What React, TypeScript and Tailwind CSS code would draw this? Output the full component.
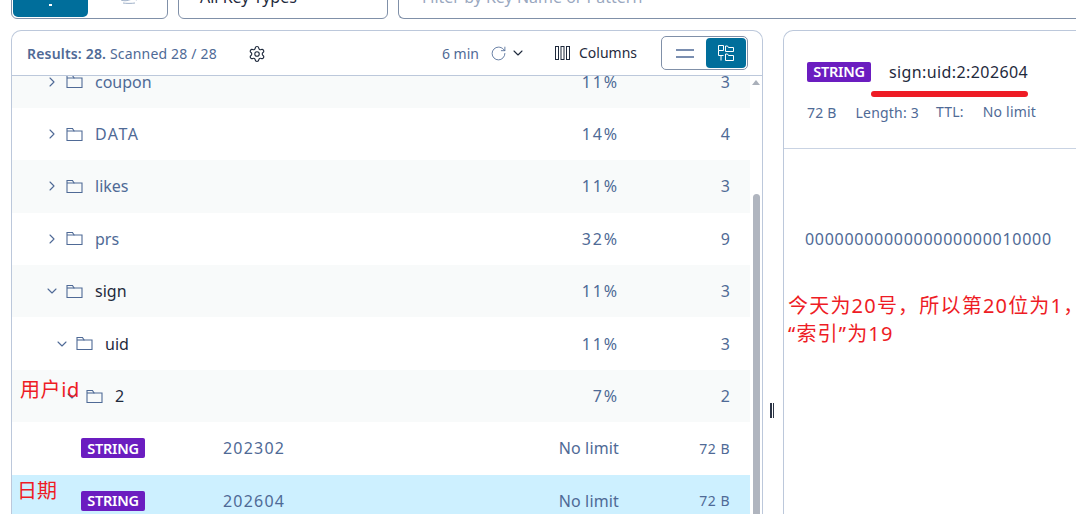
import { ChevronDown, ChevronRight, RotateCw, Settings } from 'lucide-react'

const FONT = "font-['Noto_Sans','Noto_Sans_CJK_SC',sans-serif]"
const NOTE = "font-['Noto_Sans','Noto_Sans_CJK_SC',sans-serif] text-[20px] text-[#ee1c25]"

type FolderRow = { name: string; pct: string; count: string; depth: number; open?: boolean; dark?: boolean }

const FOLDERS: FolderRow[] = [
    { name: 'coupon', pct: '11%', count: '3', depth: 0 },
    { name: 'DATA', pct: '14%', count: '4', depth: 0 },
    { name: 'likes', pct: '11%', count: '3', depth: 0 },
    { name: 'prs', pct: '32%', count: '9', depth: 0 },
    { name: 'sign', pct: '11%', count: '3', depth: 0, open: true, dark: true },
    { name: 'uid', pct: '11%', count: '3', depth: 1, open: true, dark: true },
    { name: '2', pct: '7%', count: '2', depth: 2, open: true, dark: true },
]

function FolderIcon(): JSX.Element {
    return (
        <svg width="17" height="15" viewBox="0 0 17 15" fill="none" stroke="#4f6a96" strokeWidth="1.1" className="shrink-0">
            <path d="M1 13.5V1.5h5.5l1.5 2.500h8v9.500z" />
            <path d="M1 4h7.500" />
        </svg>
    )
}

function TypeBadge(): JSX.Element {
    return (
        <span className="flex h-[20px] w-[64px] shrink-0 items-center justify-center rounded-[2px] bg-[#6b1dc0] text-[14.5px] font-semibold tracking-[-0.2px] text-white">
            STRING
        </span>
    )
}

function TreeRow({ row, striped }: { row: FolderRow; striped: boolean }): JSX.Element {
    const Chevron = row.open ? ChevronDown : ChevronRight
    return (
        <div className={`flex h-[52.4px] shrink-0 items-center text-[16px] ${striped ? 'bg-[#f8fafa]' : 'bg-white'}`}>
            <div
                className={`flex min-w-0 flex-1 items-center ${row.depth === 0 ? 'pl-[32px]' : row.depth === 1 ? 'pl-[42px]' : 'pl-[52px]'}`}
            >
                <Chevron size={16} strokeWidth={1.6} color="#4f6a96" className="shrink-0" />
                <span className="ml-[6px] flex">
                    <FolderIcon />
                </span>
                <span
                    className={`ml-[12px] ${row.name === 'DATA' || row.name === '2' ? 'tracking-[1.5px]' : ''} ${row.dark ? 'text-[#1f2a3d]' : 'text-[#4f6a96]'}`}
                >
                    {row.name}
                </span>
            </div>
            <span className="w-[80px] text-right tracking-[1.9px] text-[#4f6a96]">{row.pct}</span>
            <span className="w-[131px] pr-[20px] text-right text-[#4f6a96]">{row.count}</span>
        </div>
    )
}

function KeyRow({ name, selected }: { name: string; selected?: boolean }): JSX.Element {
    return (
        <div className={`flex h-[52.4px] shrink-0 items-center ${selected ? 'bg-[#cdf0ff]' : 'bg-white'}`}>
            <div className="flex min-w-0 flex-1 items-center pl-[69px]">
                <TypeBadge />
                <span className="ml-[78px] text-[16px] tracking-[1.2px] text-[#4f6a96]">{name}</span>
            </div>
            <span className="w-[80px] text-right text-[16px] tracking-[0.15px] text-[#4f6a96]">No limit</span>
            <span className="w-[131px] pr-[20px] text-right text-[14px] tracking-[0.5px] text-[#4f6a96]">72 B</span>
        </div>
    )
}

function TopBar(): JSX.Element {
    return (
        <div className="flex h-[19px] items-end gap-[10px] overflow-hidden pl-[11px]">
            <div className="flex h-[40px] w-[157px] shrink-0 rounded-b-[6px] border border-[#8090a8] p-[1px]">
                <div className="flex w-[75px] items-end justify-center rounded-b-[5px] bg-[#006e9b] pb-[11px]">
                    <span className="h-[2px] w-[3px] bg-white" />
                </div>
                <div className="flex flex-1 items-end justify-center pb-[13px] pl-[4px]">
                    <svg width="18" height="8" viewBox="0 0 18 8" fill="none" stroke="#9fb0c8" strokeWidth="1">
                        <path d="M1 1c3 1 5 1 8 0s5-1 8 0M1 4c3 1 5 1 8 0s5-1 8 0M3 7c3 .5 9 .5 12 0" />
                    </svg>
                </div>
            </div>
            <div className="flex h-[40px] w-[210px] shrink-0 items-center justify-between rounded-b-[6px] border border-[#8090a8] pb-[4px] pl-[21px] pr-[14px] text-[16px] text-[#1f2a3d]">
                <span>All Key Types</span>
                <ChevronDown size={14} color="#1f2a3d" />
            </div>
            <div className="flex h-[40px] min-w-0 flex-1 items-center rounded-bl-[6px] border border-r-0 border-[#8090a8] pb-[4px] pl-[23px] text-[16px] text-[#9aa8bf]">
                <span>Filter by Key Name or Pattern</span>
            </div>
        </div>
    )
}

function ListHeader(): JSX.Element {
    return (
        <div className="flex h-[45px] shrink-0 items-center border-b border-[#bcc8db] pl-[15px] pr-[14px]">
            <span className="text-[14px] tracking-[0.18px] text-[#4f6a96]">
                <span className="font-semibold">Results: 28.</span> Scanned 28 / 28
            </span>
            <Settings size={18} strokeWidth={1.5} color="#1f2a3d" className="ml-[31px] mt-[1px]" />
            <span className="ml-auto text-[14px] text-[#4f6a96]">6 min</span>
            <RotateCw size={17} strokeWidth={1.2} color="#4f6a96" className="ml-[11px]" />
            <ChevronDown size={16} strokeWidth={1.6} color="#1f2a3d" className="ml-[3px]" />
            <svg width="15" height="14" viewBox="0 0 15 14" fill="none" stroke="#1f2a3d" strokeWidth="1" className="ml-[29px]">
                <rect x="0.500" y="0.500" width="3" height="13" />
                <rect x="6" y="0.500" width="3" height="13" />
                <rect x="11.500" y="0.500" width="3" height="13" />
            </svg>
            <span className="mb-[2px] ml-[9px] text-[14px] text-[#1f2a3d]">Columns</span>
            <div className="ml-[24px] flex h-[34px] w-[87px] rounded-[5px] border border-[#8090a8] p-[1px]">
                <div className="flex flex-1 items-center justify-center">
                    <svg width="18" height="9" viewBox="0 0 18 9" fill="none" stroke="#4f6a96" strokeWidth="1.500">
                        <path d="M0 1h18M0 8h18" />
                    </svg>
                </div>
                <div className="flex w-[40px] items-center justify-center rounded-[4px] bg-[#006e9b]">
                    <svg width="16" height="16" viewBox="0 0 16 16" fill="none" stroke="#ffffff" strokeWidth="1">
                        <path d="M.500 .500h5v5h-5zM.500 5.500v5h5M3 10.500v5M7.500 1h2l1 1.500h5v4h-8zM7.500 9h2l1 1.500h5v5h-8z" />
                    </svg>
                </div>
            </div>
        </div>
    )
}

function KeyList(): JSX.Element {
    return (
        <div className="relative flex h-[484px] w-[752px] shrink-0 flex-col overflow-hidden rounded-t-[10px] border-x border-t border-[#bcc8db]">
            <ListHeader />
            <div className="flex min-h-0 flex-1 overflow-hidden">
                <div className="-mt-[20.500px] flex min-w-0 flex-1 flex-col">
                    {FOLDERS.map((row, i) => (
                        <TreeRow key={row.name} row={row} striped={i % 2 === 0} />
                    ))}
                    <KeyRow name="202302" />
                    <KeyRow name="202604" selected />
                </div>
                <div className="flex w-[12px] shrink-0 flex-col items-center">
                    <span className="mt-[4px] h-0 w-0 border-x-[4px] border-b-[5px] border-x-transparent border-b-[#aab0ba]" />
                    <span className="mt-[109px] w-[7px] flex-1 rounded-t-[4px] bg-[#b0b5bf]" />
                </div>
            </div>
            <span className={`${NOTE} absolute left-[8px] top-[345px] leading-[28px] tracking-[0.6px]`}>用户id</span>
            <span className={`${NOTE} absolute left-[5px] top-[446px] leading-[28px]`}>日期</span>
        </div>
    )
}

function KeyDetails(): JSX.Element {
    return (
        <div className="relative flex h-[484px] min-w-0 flex-1 flex-col rounded-tl-[10px] border-l border-t border-[#bcc8db]">
            <div className="h-[118px] shrink-0 border-b border-[#c9d3e3] pl-[23px]">
                <div className="flex items-center pt-[30px]">
                    <TypeBadge />
                    <span className="ml-[18px] text-[16px] leading-[22px] tracking-[0.4px] text-[#1f2a3d]">
                        sign:uid:2:202604
                    </span>
                </div>
                <div className="mt-[20px] flex items-center text-[14px] leading-[20px] tracking-[0.2px] text-[#4f6a96]">
                    <span>72 B</span>
                    <span className="ml-[19px]">Length: 3</span>
                    <span className="ml-[17px] -mt-[2px]">TTL:</span>
                    <span className="ml-[19px] -mt-[2px]">No limit</span>
                </div>
            </div>
            <div className="pl-[21px] pt-[79px] text-[16px] leading-[22px] tracking-[0.72px] text-[#4f6a96]">
                0000000000000000000010000
            </div>
            <span className="absolute left-[87px] top-[60px] h-[6px] w-[157px] rounded-full bg-[#ee1c25]" />
            <div className={`${NOTE} absolute left-[4px] top-[261px] w-[300px] leading-[28px] tracking-[1.2px]`}>
                今天为20号，所以第20位为1，
                <br />
                “索引”为19
            </div>
        </div>
    )
}

export default function App(): JSX.Element {
    return (
        <div className={`h-[514px] w-[1076px] overflow-hidden bg-white ${FONT}`}>
            <TopBar />
            <div className="mt-[11px] flex pl-[11px]">
                <KeyList />
                <div className="flex w-[20px] shrink-0 justify-center pt-[373px]">
                    <span className="ml-[-2px] flex h-[15px] gap-[1px]">
                        <span className="w-[2px] bg-[#2b3445]" />
                        <span className="w-[1px] bg-[#2b3445]" />
                    </span>
                </div>
                <KeyDetails />
            </div>
        </div>
    )
}
